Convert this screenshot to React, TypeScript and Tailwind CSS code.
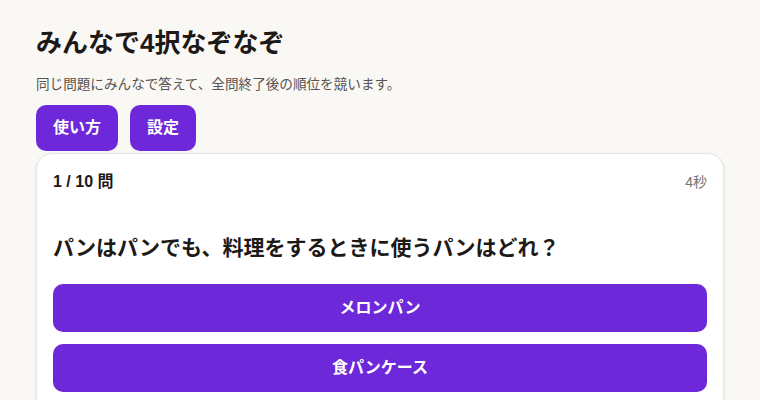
import React from 'react';

const options = ['メロンパン', '食パンケース'];

export default function App() {
  return (
    <div
      className="min-h-screen bg-[#faf8f5] px-9 pt-[27px] pb-6 text-[#1c1917]"
      style={{ fontFamily: '"Liberation Sans", "Noto Sans CJK JP", sans-serif' }}
    >
      <h1 className="text-[26px] font-bold leading-8">みんなで4択なぞなぞ</h1>
      <p className="mt-4 text-[13.6px] leading-5 text-[#57534e]">
        同じ問題にみんなで答えて、全問終了後の順位を競います。
      </p>
      <div className="mt-[10px] flex gap-3">
        <button className="h-[46px] rounded-[10px] bg-[#6d28d9] px-[17px] text-base font-bold text-white">
          使い方
        </button>
        <button className="h-[46px] rounded-[10px] bg-[#6d28d9] px-[17px] text-base font-bold text-white">
          設定
        </button>
      </div>
      <div className="mt-[2px] rounded-2xl border border-[#e7e5e4] bg-white px-4 pt-4 pb-8 shadow-sm">
        <div className="flex items-center justify-between">
          <span className="text-base font-bold leading-6">1 / 10 問</span>
          <span className="text-sm leading-6 text-[#78716c]">4秒</span>
        </div>
        <h2 className="mt-10 text-[21px] font-bold leading-7">
          パンはパンでも、料理をするときに使うパンはどれ？
        </h2>
        <div className="mt-[22px] flex flex-col gap-3">
          {options.map((o) => (
            <button
              key={o}
              className="h-12 w-full rounded-[10px] bg-[#6d28d9] text-base font-bold text-white"
            >
              {o}
            </button>
          ))}
        </div>
      </div>
    </div>
  );
}
